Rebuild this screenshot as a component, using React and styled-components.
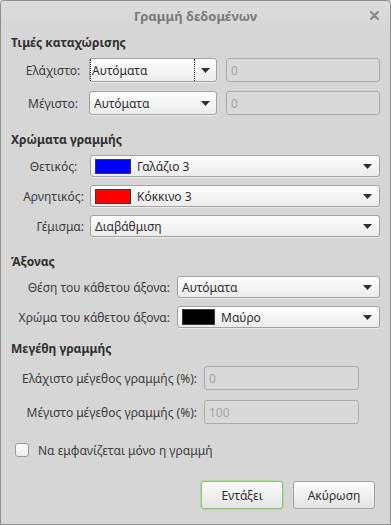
import React from "react"
import styled, { createGlobalStyle } from "styled-components"

const Global = createGlobalStyle`
  html, body {
    margin: 0;
    padding: 0;
    background: #d6d6d6;
  }
  body {
    font-family: "Noto Sans", "DejaVu Sans", sans-serif;
    font-size: 12px;
    color: #3c3c3c;
  }
`

const Window = styled.div`
  box-sizing: border-box;
  width: 391px;
  height: 525px;
  border: 1px solid #8e8e8e;
  border-radius: 4px 4px 0 0;
  background: #d6d6d6;
  display: flex;
  flex-direction: column;
`

const TitleBar = styled.div`
  height: 29px;
  display: grid;
  grid-template-columns: 1fr auto 1fr;
  align-items: center;
  border-radius: 4px 4px 0 0;
  background: linear-gradient(#dcdcdc, #d6d6d6);
`

const Title = styled.div`
  grid-column: 2;
  font-weight: bold;
  color: #7a7a7a;
  font-size: 13px;
  padding-top: 1px;
`

const Close = styled.div`
  justify-self: end;
  margin-right: 11px;
  display: flex;
  align-items: center;
`

const Body = styled.div`
  flex: 1;
  display: flex;
  flex-direction: column;
  padding: 0 10px;
`

const Heading = styled.div`
  font-weight: bold;
  color: #303030;
  line-height: 18px;
  margin-top: ${(p) => p.$top}px;
  margin-bottom: ${(p) => p.$bottom}px;
`

const Rows = styled.div`
  display: flex;
  flex-direction: column;
  gap: ${(p) => p.$gap}px;
`

const Row = styled.div`
  display: flex;
  align-items: center;
  height: ${(p) => p.$h}px;
`

const Label = styled.div`
  box-sizing: border-box;
  width: ${(p) => p.$w}px;
  margin-left: ${(p) => p.$left}px;
  text-align: ${(p) => p.$align};
  white-space: nowrap;
  color: #3c3c3c;
`

const Combo = styled.div`
  box-sizing: border-box;
  height: 100%;
  width: ${(p) => (p.$w ? p.$w + "px" : "auto")};
  flex: ${(p) => (p.$w ? "none" : "1")};
  margin-left: ${(p) => p.$left}px;
  border: 1px solid #a2a2a2;
  border-radius: 3px;
  background: linear-gradient(#fdfdfd, #ececec);
  box-shadow: 0 1px 0 rgba(255, 255, 255, 0.5);
  display: flex;
  align-items: center;
  color: #2e2e2e;
`

const ComboText = styled.div`
  flex: 1;
  align-self: stretch;
  display: flex;
  align-items: center;
  gap: 6px;
  padding-left: ${(p) => (p.$focus ? 1 : 3)}px;
  border-left: 1px dotted ${(p) => (p.$focus ? "#222" : "transparent")};
  border-right: 1px dotted ${(p) => (p.$focus ? "#222" : "transparent")};
`

const ArrowBox = styled.div`
  width: ${(p) => p.$w}px;
  display: flex;
  justify-content: center;
  align-items: center;
`

const Swatch = styled.div`
  width: ${(p) => p.$w}px;
  height: ${(p) => p.$h}px;
  background: ${(p) => p.$color};
  border: 1px solid #3a3a3a;
  flex: none;
`

const Entry = styled.div`
  box-sizing: border-box;
  height: 100%;
  width: ${(p) => (p.$w ? p.$w + "px" : "auto")};
  flex: ${(p) => (p.$w ? "none" : "1")};
  margin-left: ${(p) => p.$left}px;
  border: 1px solid #ababab;
  border-radius: 3px;
  background: #d9d9d9;
  color: #a3a3a3;
  display: flex;
  align-items: center;
  padding-left: 4px;
`

const CheckRow = styled.label`
  display: flex;
  align-items: center;
  gap: 9px;
  margin-top: 17px;
  margin-left: 4px;
  height: 18px;
  color: #3c3c3c;
`

const CheckBox = styled.span`
  box-sizing: border-box;
  width: 14px;
  height: 14px;
  border: 1px solid #9c9c9c;
  border-radius: 3px;
  background: linear-gradient(#ffffff, #ececec);
`

const Buttons = styled.div`
  display: flex;
  justify-content: flex-end;
  gap: 10px;
  margin-top: 22px;
  margin-right: 5px;
`

const Button = styled.button`
  box-sizing: border-box;
  width: 82px;
  height: 28px;
  font: inherit;
  color: #2e2e2e;
  border: 1px solid ${(p) => (p.$default ? "#8fbf74" : "#a3a3a3")};
  border-radius: 3px;
  background: linear-gradient(#fcfcfc, #e4e4e4);
  box-shadow: ${(p) =>
    p.$default ? "0 0 0 1px rgba(170, 210, 140, 0.55)" : "none"};
  padding: 0;
`

const Arrow = () => (
  <svg width="9" height="5" viewBox="0 0 9 5">
    <path d="M0 0 L9 0 L4.5 5 Z" fill="#2f2f2f" />
  </svg>
)

const CloseIcon = () => (
  <svg width="9" height="9" viewBox="0 0 9 9">
    <path
      d="M1 1 L8 8 M8 1 L1 8"
      stroke="#8a8a8a"
      strokeWidth="2.2"
      strokeLinecap="round"
    />
  </svg>
)

const App = () => {
  return (
    <>
      <Global />
      <Window>
        <TitleBar>
          <Title>Γραμμή δεδομένων</Title>
          <Close>
            <CloseIcon />
          </Close>
        </TitleBar>
        <Body>
          <Heading $top={4} $bottom={6}>
            Τιμές καταχώρισης
          </Heading>
          <Rows $gap={9}>
            <Row $h={24}>
              <Label $w={61} $left={12} $align="center">
                Ελάχιστο:
              </Label>
              <Combo $w={128} $left={6}>
                <ComboText $focus>Αυτόματα</ComboText>
                <ArrowBox $w={21}>
                  <Arrow />
                </ArrowBox>
              </Combo>
              <Entry $w={154} $left={9}>
                0
              </Entry>
            </Row>
            <Row $h={24}>
              <Label $w={61} $left={12} $align="center">
                Μέγιστο:
              </Label>
              <Combo $w={128} $left={6}>
                <ComboText>Αυτόματα</ComboText>
                <ArrowBox $w={22}>
                  <Arrow />
                </ArrowBox>
              </Combo>
              <Entry $w={154} $left={9}>
                0
              </Entry>
            </Row>
          </Rows>

          <Heading $top={16} $bottom={6}>
            Χρώματα γραμμής
          </Heading>
          <Rows $gap={8}>
            <Row $h={22}>
              <Label $w={61} $left={12} $align="center">
                Θετικός:
              </Label>
              <Combo $left={6}>
                <ComboText>
                  <Swatch $w={34} $h={13} $color="#0000ff" />
                  Γαλάζιο 3
                </ComboText>
                <ArrowBox $w={24}>
                  <Arrow />
                </ArrowBox>
              </Combo>
            </Row>
            <Row $h={22}>
              <Label $w={61} $left={12} $align="center">
                Αρνητικός:
              </Label>
              <Combo $left={6}>
                <ComboText>
                  <Swatch $w={34} $h={13} $color="#ff0000" />
                  Κόκκινο 3
                </ComboText>
                <ArrowBox $w={24}>
                  <Arrow />
                </ArrowBox>
              </Combo>
            </Row>
            <Row $h={22}>
              <Label $w={61} $left={12} $align="right">
                Γέμισμα:
              </Label>
              <Combo $left={6}>
                <ComboText>Διαβάθμιση</ComboText>
                <ArrowBox $w={24}>
                  <Arrow />
                </ArrowBox>
              </Combo>
            </Row>
          </Rows>

          <Heading $top={16} $bottom={5}>
            Άξονας
          </Heading>
          <Rows $gap={8}>
            <Row $h={22}>
              <Label $w={159} $left={0} $align="right">
                Θέση του κάθετου άξονα:
              </Label>
              <Combo $left={7}>
                <ComboText>Αυτόματα</ComboText>
                <ArrowBox $w={24}>
                  <Arrow />
                </ArrowBox>
              </Combo>
            </Row>
            <Row $h={22}>
              <Label $w={159} $left={0} $align="right">
                Χρώμα του κάθετου άξονα:
              </Label>
              <Combo $left={7}>
                <ComboText>
                  <Swatch $w={31} $h={14} $color="#000000" />
                  Μαύρο
                </ComboText>
                <ArrowBox $w={24}>
                  <Arrow />
                </ArrowBox>
              </Combo>
            </Row>
          </Rows>

          <Heading $top={12} $bottom={8}>
            Μεγέθη γραμμής
          </Heading>
          <Rows $gap={10}>
            <Row $h={24}>
              <Label $w={186} $left={0} $align="right">
                Ελάχιστο μέγεθος γραμμής (%):
              </Label>
              <Entry $w={155} $left={7}>
                0
              </Entry>
            </Row>
            <Row $h={24}>
              <Label $w={186} $left={0} $align="right">
                Μέγιστο μέγεθος γραμμής (%):
              </Label>
              <Entry $w={155} $left={7}>
                100
              </Entry>
            </Row>
          </Rows>

          <CheckRow>
            <CheckBox />
            Να εμφανίζεται μόνο η γραμμή
          </CheckRow>

          <Buttons>
            <Button $default>Εντάξει</Button>
            <Button>Ακύρωση</Button>
          </Buttons>
        </Body>
      </Window>
    </>
  )
}

export default App
